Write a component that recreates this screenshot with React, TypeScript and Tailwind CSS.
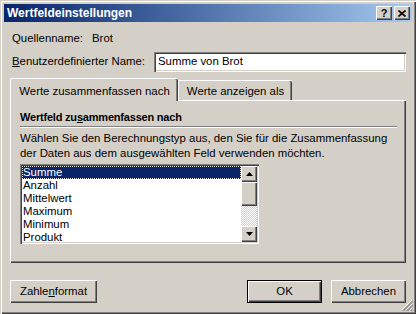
import { useState } from "react"

const raised =
  "bg-[#d4d0c8] shadow-[inset_1px_1px_#fff,inset_-1px_-1px_#404040,inset_-2px_-2px_#808080]"
const sunken =
  "shadow-[inset_1px_1px_#808080,inset_2px_2px_#404040,inset_-1px_-1px_#fff,inset_-2px_-2px_#d4d0c8]"

const items = ["Summe", "Anzahl", "Mittelwert", "Maximum", "Minimum", "Produkt"]

function Arrow({ down }: { down?: boolean }) {
  return (
    <svg width="7" height="4" viewBox="0 0 7 4">
      {down ? (
        <path d="M0 0h7L3.5 4z" fill="#000" />
      ) : (
        <path d="M0 4h7L3.5 0z" fill="#000" />
      )}
    </svg>
  )
}

function ListBox() {
  const [selected, setSelected] = useState(0)
  return (
    <div className={`mt-[3px] flex h-[80px] w-[239px] bg-white p-[2px] ${sunken}`}>
      <div className="flex-1 overflow-hidden">
        {items.map((item, i) => (
          <div
            key={item}
            onClick={() => setSelected(i)}
            className={
              i === selected
                ? "h-[13px] pl-[1px] leading-[13px] bg-[#0a246a] text-white outline-1 outline-dotted outline-[#e0e0e0] -outline-offset-1"
                : "h-[13px] pl-[1px] leading-[13px] text-black"
            }
          >
            {item}
          </div>
        ))}
      </div>

      {/* Scrollbar */}
      <div className="flex w-[16px] flex-col">
        <div className={`flex h-[16px] items-center justify-center ${raised}`}>
          <Arrow />
        </div>
        <div className={`h-[24px] ${raised}`} />
        <div className="flex-1 bg-[repeating-conic-gradient(#ffffff_0%_25%,#d4d0c8_0%_50%)] bg-size-[2px_2px]" />
        <div className={`flex h-[16px] items-center justify-center ${raised}`}>
          <Arrow down />
        </div>
      </div>
    </div>
  )
}

export default function App() {
  return (
    <div className="relative flex h-[314px] w-[416px] flex-col bg-[#d4d0c8] p-[4px] font-['Liberation_Sans',Arial,sans-serif] text-[11.4px] text-black shadow-[inset_1px_1px_#d4d0c8,inset_2px_2px_#fff,inset_-1px_-1px_#404040,inset_-2px_-2px_#808080]">
      {/* Title bar */}
      <div className="flex h-[18px] items-center bg-linear-to-r from-[#0a246a] to-[#a6caf0] pl-[3px] pr-[2px]">
        <span className="flex-1 text-[12px] font-bold leading-[18px] text-white">
          Wertfeldeinstellungen
        </span>
        <div className="flex gap-[2px]">
          <div className={`flex h-[14px] w-[16px] items-center justify-center text-[11px] font-bold leading-none ${raised}`}>
            ?
          </div>
          <div className={`flex h-[14px] w-[16px] items-center justify-center ${raised}`}>
            <svg width="8" height="7" viewBox="0 0 8 7">
              <path d="M0.5 0.5l7 6M7.5 0.5l-7 6" stroke="#000" strokeWidth="1.6" />
            </svg>
          </div>
        </div>
      </div>

      {/* Body */}
      <div className="flex flex-1 flex-col px-[6px]">
        <div className="mt-[9px] flex h-[14px] items-center pl-[2px] leading-[14px]">
          <span className="w-[80px]">Quellenname:</span>
          <span>Brot</span>
        </div>

        <div className="mt-[7px] flex items-center">
          <span className="pl-[2px]">
            <span className="underline underline-offset-[1px]">B</span>enutzerdefinierter Name:
          </span>
          <div className={`ml-auto flex h-[20px] w-[252px] items-center bg-white pl-[4px] ${sunken}`}>
            Summe von Brot
          </div>
        </div>

        {/* Tabs */}
        <div className="mt-[6px] flex h-[22px] items-end">
          <div className="relative z-10 mb-[-1px] flex h-[23px] w-[168px] items-center justify-center rounded-t-[2px] border-l border-t border-white bg-[#d4d0c8] pt-[3px] shadow-[inset_-1px_0_#404040,inset_-2px_0_#808080]">
            Werte zusammenfassen nach
          </div>
          <div className="flex h-[20px] w-[114px] items-center justify-center rounded-t-[2px] border-l border-t border-white pt-[2px] shadow-[inset_-1px_0_#404040,inset_-2px_0_#808080]">
            Werte anzeigen als
          </div>
        </div>

        <div className="flex h-[163px] flex-col pl-[10px] pr-[9px] pt-[10px] shadow-[inset_1px_1px_#fff,inset_-1px_-1px_#404040,inset_-2px_-2px_#808080]">
          <div className="h-[14px] text-[11px] font-bold leading-[14px] tracking-[-0.2px]">
            Wertfeld zu<span className="underline underline-offset-[1px]">s</span>ammenfassen nach
          </div>
          <div className="mt-[2px] h-[2px] border-t border-b border-t-[#808080] border-b-white" />
          <div className="mt-[3px] whitespace-nowrap leading-[15px]">
            Wählen Sie den Berechnungstyp aus, den Sie für die Zusammenfassung
            <br />
            der Daten aus dem ausgewählten Feld verwenden möchten.
          </div>
          <ListBox />
        </div>

        {/* Buttons */}
        <div className="mt-[17px] flex h-[23px] items-center">
          <button className={`flex h-[23px] w-[87px] items-center justify-center ${raised}`}>
            Zahle<span className="underline underline-offset-[1px]">n</span>format
          </button>
          <div className="ml-auto flex gap-[9px]">
            <button className="flex h-[23px] w-[75px] items-center justify-center bg-[#d4d0c8] shadow-[inset_0_0_0_1px_#000,inset_2px_2px_#fff,inset_-2px_-2px_#404040,inset_-3px_-3px_#808080]">
              OK
            </button>
            <button className={`flex h-[23px] w-[75px] items-center justify-center ${raised}`}>
              Abbrechen
            </button>
          </div>
        </div>
      </div>

      {/* Resize grip */}
      <svg className="absolute bottom-[3px] right-[3px]" width="12" height="12" viewBox="0 0 12 12">
        <path d="M11 1L1 11M11 5L5 11M11 9L9 11" stroke="#fff" strokeWidth="1" />
        <path d="M12 1.5L1.5 12M12 2.5L2.5 12M12 5.5L5.5 12M12 6.5L6.5 12M12 9.5L9.5 12M12 10.5L10.5 12" stroke="#808080" strokeWidth="1" />
      </svg>
    </div>
  )
}
